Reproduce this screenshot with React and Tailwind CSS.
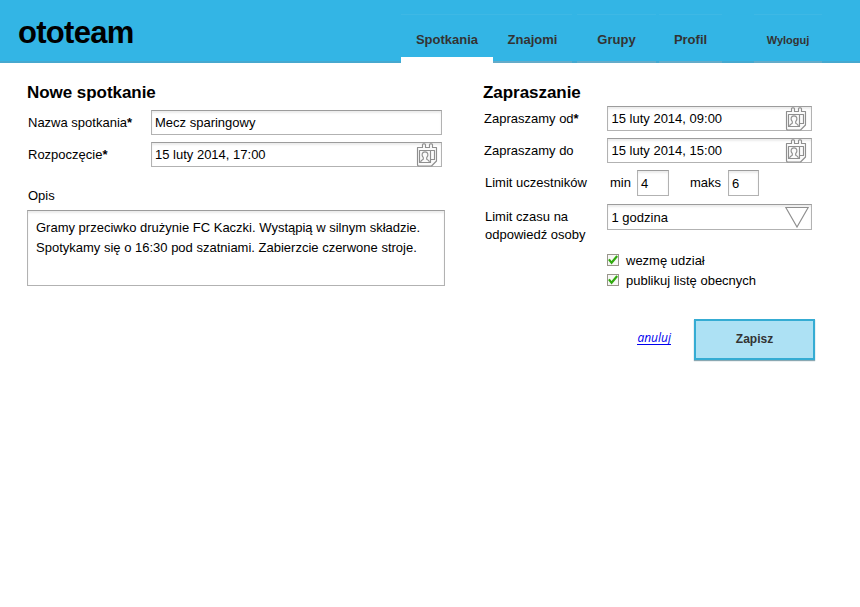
import React from "react";

function CalendarIcon({ className = "" }) {
  return (
    <svg className={`block shrink-0 ${className}`} width="22" height="24" viewBox="0 0 22 24" fill="none" stroke="#8f8f8f" strokeWidth="1.15" strokeLinejoin="round">
      <path d="M1.5 4.5H6.5V1.8Q6.5 .8 7.5 .8H8.5Q9.5 .8 9.5 1.8V4.5H13.5V1.8Q13.5 .8 14.5 .8H15.5Q16.5 .8 16.5 1.8V4.5H20.5V18L15.5 23H3Q1.5 23 1.5 21.5Z" fill="#fbfbfb" />
      <path d="M3.5 7.5H14.5V19.5H3.5Z" />
      <path d="M14.5 7.5H18.5V16.5H14.5" />
      <path d="M4.5 19.2C4.7 17.4 5.6 17 7.3 16.2V14.6C5.2 12.2 5.8 8.9 9 8.9C12.2 8.9 12.8 12.2 10.7 14.6V16.2C12.6 17 13.3 17.4 13.5 19.2" />
    </svg>
  );
}

function Field({ className = "", children }) {
  return (
    <div className={`flex shrink-0 items-center justify-between border border-[#b2b2b2] border-t-[#9c9c9c] bg-white text-[13px] shadow-[inset_0_2px_2px_#ececec] ${className}`}>
      {children}
    </div>
  );
}

function Tab({ className = "", active = false, children }) {
  return (
    <a className={`flex h-[63px] shrink-0 flex-col items-center ${className}`}>
      <span className="mt-[14px] h-px w-full bg-[#3eb8e5]" />
      <span className="mt-[15px] h-[27px] leading-5 whitespace-nowrap">{children}</span>
      <span className={active ? "h-[6px] w-full bg-white" : "mt-1 h-[2px] w-full bg-[#64abc9]"} />
    </a>
  );
}

function Check({ children }) {
  return (
    <label className="flex h-5 items-center">
      <span className="flex h-3 w-3 items-center justify-center border border-[#99958b] bg-[#f7f7f5]">
        <svg className="block shrink-0" width="10" height="10" viewBox="0 0 10 10" fill="none" stroke="#2fa90d" strokeWidth="2.2">
          <path d="M0.9 4.3L3.6 7.8L9.2 1" />
        </svg>
      </span>
      <span className="ml-[7px] pt-[2px]">{children}</span>
    </label>
  );
}

export default function App() {
  return (
    <div className="h-[607px] w-[860px] overflow-hidden bg-white font-['Liberation_Sans',Arial,sans-serif] text-[13px] text-black">
      <header className="flex h-[63px] border-b-2 border-[#46a8cf] bg-[#33b5e5]">
        <div className="w-[401px] shrink-0 pt-[15px] pl-[18px] text-[31px] leading-9 font-bold tracking-[-0.7px]">ototeam</div>
        <nav className="flex text-[13px] font-bold text-[#333333]">
          <Tab active className="w-[92px]">Spotkania</Tab>
          <Tab className="w-[79px]">Znajomi</Tab>
          <Tab className="ml-[5px] w-[79px]">Grupy</Tab>
          <Tab className="ml-[3px] w-[63px]">Profil</Tab>
          <Tab className="ml-[32px] w-[68px] text-[11px]">Wyloguj</Tab>
        </nav>
      </header>

      <main className="flex">
        <section className="w-[483px] shrink-0 pl-[27px]">
          <h1 className="mt-[20px] h-[27px] text-[17px] leading-5 font-bold tracking-[-0.05px]">Nowe spotkanie</h1>
          <div className="flex h-[25px] items-center">
            <span className="w-[124px] pl-px">Nazwa spotkania<b>*</b></span>
            <Field className="h-[25px] w-[291px] pl-[3px]">Mecz sparingowy</Field>
          </div>
          <div className="mt-[7px] flex h-[25px] items-center">
            <span className="w-[124px] pl-px">Rozpoczęcie<b>*</b></span>
            <Field className="h-[25px] w-[291px] pl-[3px]">
              15 luty 2014, 17:00
              <CalendarIcon className="mr-[3px]" />
            </Field>
          </div>
          <div className="mt-[19px] h-[24px] pl-px leading-5">Opis</div>
          <div className="h-[76px] w-[418px] border border-[#b2b2b2] border-t-[#9c9c9c] pt-[7px] pl-2 leading-5 whitespace-nowrap shadow-[inset_0_2px_2px_#ececec]">
            Gramy przeciwko drużynie FC Kaczki. Wystąpią w silnym składzie.
            <br />
            Spotykamy się o 16:30 pod szatniami. Zabierzcie czerwone stroje.
          </div>
        </section>

        <section className="w-[332px]">
          <h2 className="mt-[20px] h-[23px] text-[17px] leading-5 font-bold tracking-[-0.05px]">Zapraszanie</h2>
          <div className="flex h-[25px] items-center">
            <span className="w-[124px] pl-px">Zapraszamy od<b>*</b></span>
            <Field className="h-[25px] w-[205px] pl-[3.5px]">
              15 luty 2014, 09:00
              <CalendarIcon className="mr-[4px]" />
            </Field>
          </div>
          <div className="mt-[7px] flex h-[25px] items-center">
            <span className="w-[124px] pl-px">Zapraszamy do</span>
            <Field className="h-[25px] w-[205px] pl-[3.5px]">
              15 luty 2014, 15:00
              <CalendarIcon className="mr-[4px]" />
            </Field>
          </div>
          <div className="mt-[7px] flex h-[26px] items-center">
            <span className="w-[127px] pl-[2px]">Limit uczestników</span>
            <span className="w-[27px]">min</span>
            <Field className="h-[26px] w-[32px] pt-[2px] pl-[3px]">4</Field>
            <span className="ml-[21px] w-[38px]">maks</span>
            <Field className="h-[26px] w-[31px] pt-[2px] pl-[3px]">6</Field>
          </div>
          <div className="mt-[8px] flex h-[46px] items-start">
            <span className="w-[124px] pt-[4px] pl-[2px] leading-[18px]">
              Limit czasu na
              <br />
              odpowiedź osoby
            </span>
            <Field className="h-[26px] w-[205px] pl-[3.5px]">
              <span className="pt-[2px]">1 godzina</span>
              <svg className="mr-[2px] block" width="24" height="22" viewBox="0 0 24 22" fill="#fff" stroke="#8f8f8f" strokeWidth="1.2">
                <path d="M0.8 1.5H23.2L12 21Z" />
              </svg>
            </Field>
          </div>
          <div className="ml-[124px]">
            <Check>wezmę udział</Check>
            <Check>publikuj listę obecnych</Check>
          </div>
          <div className="mt-[29px] flex h-[41px] items-center justify-end">
            <a className="mr-[23px] mb-[3px] border-b border-[#0000ee] font-['Comic_Sans_MS','Open_Sans',sans-serif] text-[12px] leading-[12px] text-[#0000ee] italic">anuluj</a>
            <button className="h-[41px] w-[121px] border-2 border-[#35acd3] bg-[#ade1f4] pb-[2px] text-[12px] font-bold text-[#333333] shadow-[0_1px_1px_#8aa8b2]">Zapisz</button>
          </div>
        </section>
      </main>
    </div>
  );
}
